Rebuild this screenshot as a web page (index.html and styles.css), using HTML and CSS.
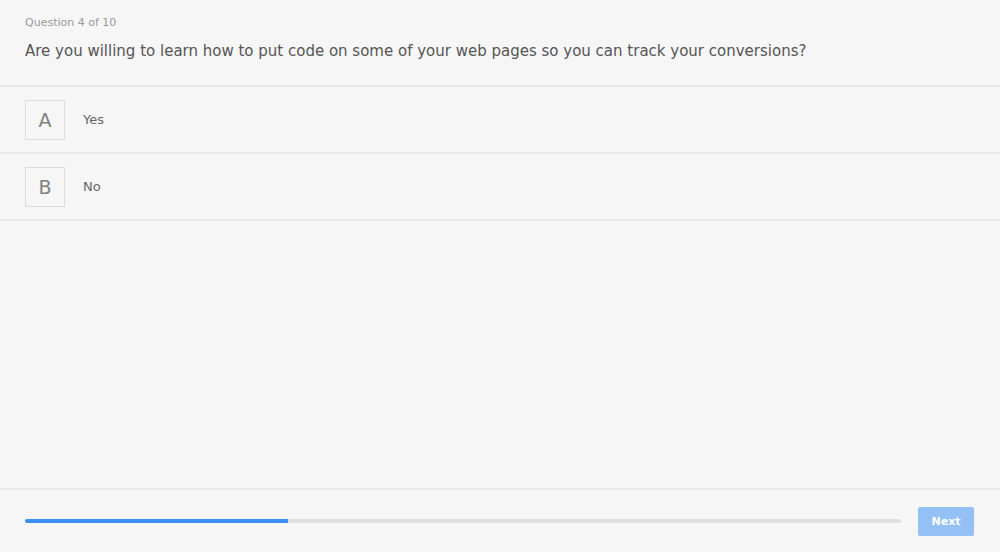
FILE: index.html
```html
<!DOCTYPE html>
<html lang="en">
<head>
    <meta charset="UTF-8">
    <meta name="viewport" content="width=device-width, initial-scale=1.0">
    <title>Quiz</title>
    <link rel="stylesheet" href="styles.css">
</head>
<body>
    <div class="quiz">
        <div class="question-head">
            <div class="question-count">Question 4 of 10</div>
            <div class="question-text">Are you willing to learn how to put code on some of your web pages so you can track your conversions?</div>
        </div>

        <div class="options">
            <div class="option">
                <div class="option-key">A</div>
                <div class="option-label">Yes</div>
            </div>
            <div class="option">
                <div class="option-key">B</div>
                <div class="option-label">No</div>
            </div>
        </div>

        <div class="footer">
            <div class="progress">
                <div class="progress-fill" style="width: 30%"></div>
            </div>
            <button class="next-btn">Next</button>
        </div>
    </div>
</body>
</html>
```

FILE: styles.css
```css
body {
    margin: 0;
    padding: 0;
    background: #f6f6f6;
    font-family: "DejaVu Sans", "Open Sans", sans-serif;
    color: #555;
}

.quiz {
    display: flex;
    flex-direction: column;
    height: 100vh;
}

.question-head {
    padding: 16px 25px 0 25px;
    height: 69px;
    border-bottom: 2px solid #e8e8e8;
}

.question-count {
    font-size: 11px;
    color: #999;
    line-height: 14px;
}

.question-text {
    margin-top: 12px;
    font-size: 15px;
    color: #555;
    line-height: 18px;
}

.options {
    flex: 1;
}

.option {
    display: flex;
    align-items: center;
    height: 65px;
    padding: 0 25px;
    border-bottom: 2px solid #e8e8e8;
}

.option-key {
    width: 38px;
    height: 38px;
    border: 1px solid #dcdcdc;
    display: flex;
    align-items: center;
    justify-content: center;
    font-size: 19px;
    color: #808080;
}

.option-label {
    margin-left: 18px;
    font-size: 13px;
    color: #666;
}

.footer {
    height: 62px;
    border-top: 2px solid #e8e8e8;
    display: flex;
    align-items: center;
    padding: 0 26px 0 25px;
}

.progress {
    flex: 1;
    height: 4px;
    background: #e0e0e0;
    border-radius: 2px;
    overflow: hidden;
}

.progress-fill {
    height: 100%;
    background: #3a8ef6;
}

.next-btn {
    margin-left: 17px;
    width: 56px;
    height: 29px;
    border: none;
    border-radius: 2px;
    background: #93c1f5;
    color: #fff;
    font-family: "DejaVu Sans", sans-serif;
    font-size: 11px;
    font-weight: bold;
    cursor: pointer;
}
```
